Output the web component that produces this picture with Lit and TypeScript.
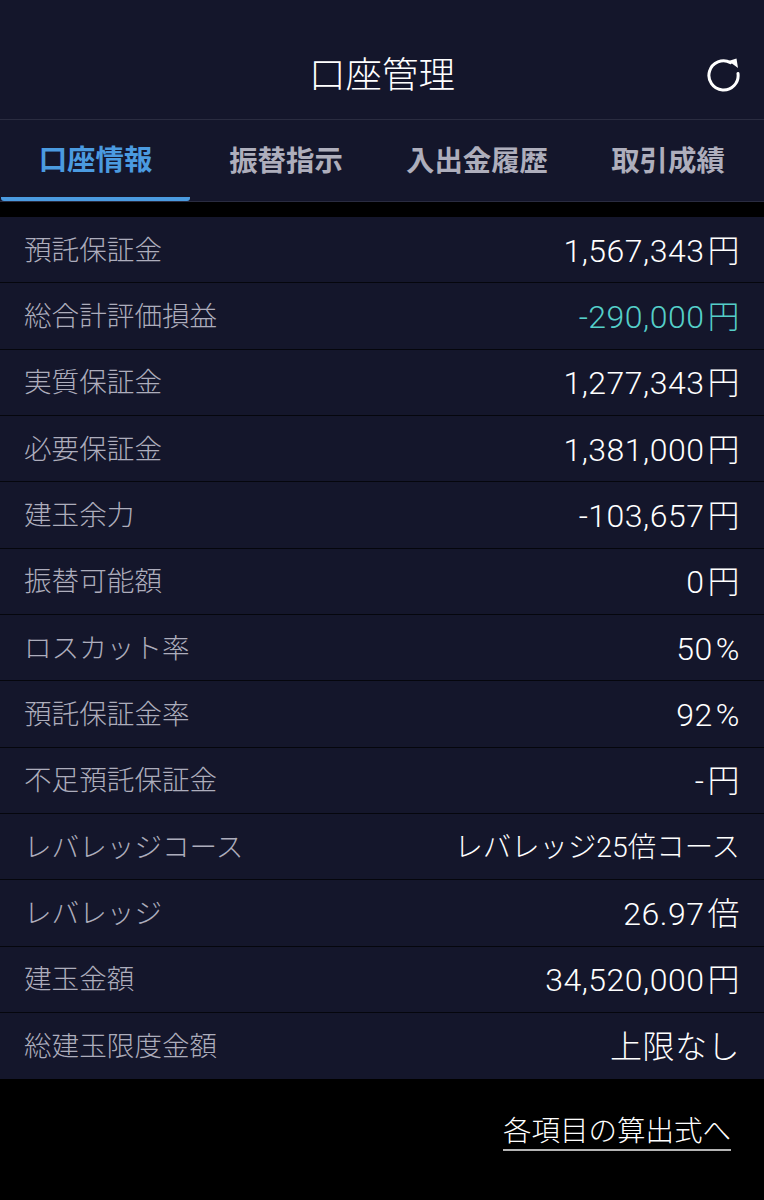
import {css, html, LitElement} from "lit";
import {customElement, state} from "lit/decorators.js";
import {classMap} from "lit/directives/class-map.js";

const TABS = ["口座情報", "振替指示", "入出金履歴", "取引成績"];

const ROWS: {label: string; value: string; unit?: string; down?: boolean; small?: boolean}[] = [
  {label: "預託保証金", value: "1,567,343", unit: "円"},
  {label: "総合計評価損益", value: "-290,000", unit: "円", down: true},
  {label: "実質保証金", value: "1,277,343", unit: "円"},
  {label: "必要保証金", value: "1,381,000", unit: "円"},
  {label: "建玉余力", value: "-103,657", unit: "円"},
  {label: "振替可能額", value: "0", unit: "円"},
  {label: "ロスカット率", value: "50", unit: "%"},
  {label: "預託保証金率", value: "92", unit: "%"},
  {label: "不足預託保証金", value: "-", unit: "円"},
  {label: "レバレッジコース", value: "レバレッジ25倍コース", small: true},
  {label: "レバレッジ", value: "26.97", unit: "倍"},
  {label: "建玉金額", value: "34,520,000", unit: "円"},
  {label: "総建玉限度金額", value: "上限なし"},
];

@customElement("app-root")
export class AppRoot extends LitElement {
  static styles = css`
    :host {
      display: block;
      width: 764px;
      height: 1200px;
      background: #000;
      color: #fff;
      font-family: Roboto, "Noto Sans CJK JP", sans-serif;
      overflow: hidden;
    }

    .header {
      display: grid;
      grid-template-columns: 1fr auto 1fr;
      align-items: center;
      height: 120px;
      padding: 0 24px;
      box-sizing: border-box;
      background: #14162b;
      border-bottom: 1px solid #2a2c40;
    }

    .title {
      grid-column: 2;
      font-size: 36.5px;
      font-weight: 300;
      line-height: 1;
      padding-top: 33px;
    }

    .refresh {
      justify-self: end;
      width: 34px;
      height: 34px;
      margin-top: 30px;
    }

    .tabs {
      display: grid;
      grid-template-columns: 190px 192px 190px 192px;
      height: 81px;
      background: #14162b;
      border-bottom: 1px solid #2a2c40;
    }

    .tab {
      display: flex;
      align-items: center;
      justify-content: center;
      height: 81px;
      box-sizing: border-box;
      padding-bottom: 5px;
      font-size: 28.4px;
      font-weight: 700;
      color: #aeaebc;
      white-space: nowrap;
    }

    .tab.active {
      color: #4b9be0;
      border-bottom: 4px solid #4b9be0;
      border-radius: 0 0 3px 3px;
      margin: 0 0 0 1px;
      padding-bottom: 2px;
    }

    .list {
      margin-top: 15px;
      background: #14162b;
    }

    .row {
      display: flex;
      align-items: center;
      justify-content: space-between;
      height: 66.33px;
      box-sizing: border-box;
      padding: 2px 24px 0 24px;
      border-bottom: 1px solid #05060d;
    }

    .row:last-child {
      border-bottom: none;
    }

    .label {
      font-size: 27.6px;
      font-weight: 300;
      line-height: 40px;
      color: #adadbc;
      white-space: nowrap;
    }

    .value {
      font-size: 32px;
      font-weight: 300;
      line-height: 40px;
      letter-spacing: 0.5px;
      color: #fff;
      white-space: nowrap;
    }

    .unit {
      margin-left: 3px;
    }

    .value.small {
      font-size: 28.4px;
      letter-spacing: 0;
    }

    .value.down {
      color: #55cfc9;
    }

    .footer {
      display: flex;
      justify-content: flex-end;
      padding: 35px 33px 0 0;
    }

    .link {
      font-size: 28.5px;
      font-weight: 300;
      line-height: 35px;
      color: #fff;
      border-bottom: 2px solid #b4b4b4;
      white-space: nowrap;
    }
  `;

  @state() active = 0;

  render() {
    return html`
      <div class="header">
        <div class="title">口座管理</div>
        <svg class="refresh" viewBox="0 0 34 34" fill="none">
          <path d="M32 15.5A14.6 14.6 0 1 1 24.5 4.6" stroke="#fff" stroke-width="3" stroke-linecap="round"/>
          <path d="M22.5 3 30.5 0.5 32 10Z" fill="#fff"/>
        </svg>
      </div>
      <div class="tabs">
        ${TABS.map((t, i) => html`
          <div class=${classMap({tab: true, active: i === this.active})}>${t}</div>
        `)}
      </div>
      <div class="list">
        ${ROWS.map(r => html`
          <div class="row">
            <span class="label">${r.label}</span>
            <span class=${classMap({value: true, down: !!r.down, small: !!r.small})}>${r.value}${r.unit ? html`<span class="unit">${r.unit}</span>` : ""}</span>
          </div>
        `)}
      </div>
      <div class="footer">
        <span class="link">各項目の算出式へ</span>
      </div>
    `;
  }
}

declare global {
  interface HTMLElementTagNameMap {
    "app-root": AppRoot;
  }
}
